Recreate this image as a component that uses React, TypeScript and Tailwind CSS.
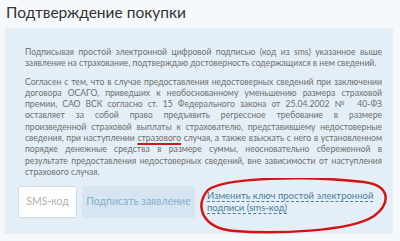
import React from "react";

const font = { fontFamily: "Lato, 'Open Sans', sans-serif" };

const para1 = [
    "Подписывая простой электронной цифровой подписью (код из sms) указанное выше",
    "заявление на страхование, подтверждаю достоверность содержащихся в нем сведений.",
];

const Line = ({ children, last }: { children: React.ReactNode; last?: boolean }) => (
    <div className={`whitespace-nowrap ${last ? "text-left" : "text-justify [text-align-last:justify]"}`}>
        {children}
    </div>
);

const App = () => {
    return (
        <div className="w-[400px] h-[241px] bg-[#f5f9fc] overflow-hidden" style={font}>
            <h1 className="px-[6px] pt-[1px] text-[15.5px] leading-[22px] text-[#333] font-normal">
                Подтверждение покупки
            </h1>

            <section className="mx-[5px] mt-[5px] w-[388px] h-[206px] bg-[#e4eef6] pl-[20px] pr-[11px] pt-[19px]">
                <div className="text-[8.6px] leading-[11.3px] text-[#6e6e6e]">
                    <div>
                        <Line>{para1[0]}</Line>
                        <Line last>{para1[1]}</Line>
                    </div>
                    <div className="mt-[7px]">
                        <Line>Согласен с тем, что в случае предоставления недостоверных сведений при заключении</Line>
                        <Line>договора ОСАГО, приведших к необоснованному уменьшению размера страховой</Line>
                        <Line>премии, САО ВСК согласно ст. 15 Федерального закона от 25.04.2002 №&nbsp; 40-ФЗ</Line>
                        <Line>оставляет за собой право предъявить регрессное требование в размере</Line>
                        <Line>произведенной страховой выплаты к страхователю, представившему недостоверные</Line>
                        <Line>
                            сведения, при наступлении{" "}
                            <span className="underline decoration-[#d01818] decoration-2 underline-offset-[2px]">
                                стразового
                            </span>{" "}
                            случая, а также взыскать с него в установленном
                        </Line>
                        <Line>порядке денежные средства в размере суммы, неосновательно сбереженной в</Line>
                        <Line>результате предоставления недостоверных сведений, вне зависимости от наступления</Line>
                        <Line last>страхового случая.</Line>
                    </div>
                </div>

                <div className="relative flex items-center mt-[8px] -ml-[7px]">
                    <div className="w-[59px] h-[32px] bg-white border border-[#d3dde6] rounded-[2px] flex items-center justify-center text-[10.5px] text-[#b0b0b0]">
                        SMS-код
                    </div>
                    <button className="ml-[5px] w-[113px] h-[32px] bg-[#d5e5f1] text-[10.5px] text-[#84b0cc] rounded-[2px]">
                        Подписать заявление
                    </button>
                    <div className="ml-[12px] text-[9.5px] leading-[12px] text-[#4a8096] whitespace-nowrap">
                        <span className="border-b border-dashed border-[#4a8096]">
                            Изменить ключ простой электронной
                        </span>
                        <br />
                        <span className="border-b border-dashed border-[#4a8096]">
                            подписи (sms-код)
                        </span>
                    </div>

                    <svg
                        className="absolute left-[176px] -top-[8px] pointer-events-none"
                        width="196"
                        height="60"
                        viewBox="0 0 196 60"
                        fill="none"
                    >
                        <path
                            d="M14 12 C 30 0, 110 -3, 170 4 C 198 8, 196 26, 180 38 C 156 54, 80 56, 40 53 C 8 50, 0 28, 14 12 Z"
                            stroke="#d41414"
                            strokeWidth="2.5"
                            strokeLinecap="round"
                        />
                    </svg>
                </div>
            </section>
        </div>
    );
};

export default App;
